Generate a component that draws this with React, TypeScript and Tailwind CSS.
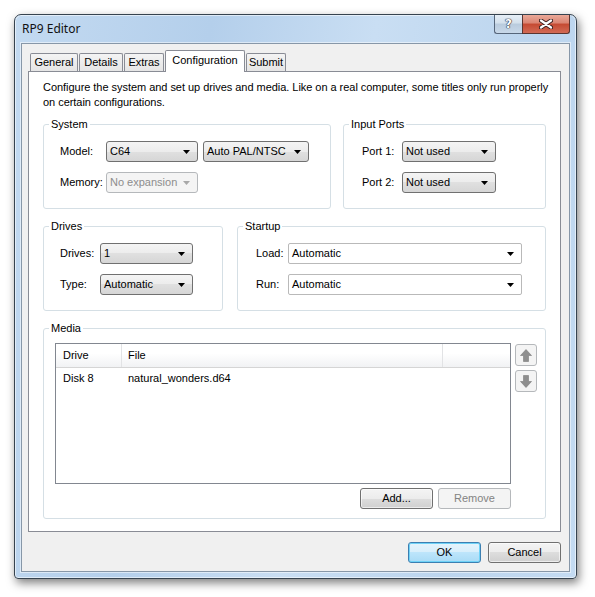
import React from "react";

const ui = "font-['Liberation_Sans',Arial,sans-serif] text-[11px] leading-[13px] text-black";

function Arrow({ color = "#000" }: { color?: string }) {
  return (
    <svg width="7" height="4" viewBox="0 0 7 4" className="shrink-0">
      <polygon points="0,0 7,0 3.5,4" fill={color} />
    </svg>
  );
}

type ComboProps = { value: string; width: string; kind?: "button" | "white" | "disabled" };

function Combo({ value, width, kind = "button" }: ComboProps) {
  const look =
    kind === "white"
      ? "border-[#b9b9b9] bg-white rounded-[2px]"
      : kind === "disabled"
      ? "border-[#b5b8bb] bg-[#f4f4f4] text-[#8d8d8d] rounded-[3px]"
      : "border-[#707070] bg-[linear-gradient(#f4f4f4,#ececec_50%,#e0e0e0_50%,#d6d6d6)] rounded-[3px]";
  return (
    <div className={`${width} h-[21px] flex items-center justify-between border pl-[3px] pr-[7px] ${look}`}>
      <span className="whitespace-nowrap">{value}</span>
      <Arrow color={kind === "disabled" ? "#a8a8a8" : "#000"} />
    </div>
  );
}

function Btn({ label, kind = "normal" }: { label: string; kind?: "normal" | "default" | "disabled" }) {
  const look =
    kind === "default"
      ? "border-[#3c7fb1] bg-[linear-gradient(#e5f4fc,#d7eefb_50%,#bde5fb_50%,#a9dbf6)] shadow-[inset_0_0_0_1px_#6fd2f7]"
      : kind === "disabled"
      ? "border-[#b5b8bb] bg-[#f4f4f4] text-[#838383]"
      : "border-[#707070] bg-[linear-gradient(#f4f4f4,#ececec_50%,#dddddd_50%,#d0d0d0)] shadow-[inset_0_0_0_1px_rgba(255,255,255,0.6)]";
  return (
    <div className={`w-[73px] h-[21px] flex items-center justify-center rounded-[3px] border ${look}`}>
      {label}
    </div>
  );
}

function MoveBtn({ down }: { down?: boolean }) {
  return (
    <div className="w-[22px] h-[22px] flex items-center justify-center rounded-[3px] border border-[#b5b8bb] bg-[#f4f4f4]">
      <svg width="12" height="13" viewBox="0 0 12 13" className={down ? "rotate-180" : ""}>
        <polygon points="6,0.5 11.5,6.5 8.5,6.5 8.5,12.5 3.5,12.5 3.5,6.5 0.5,6.5" fill="#8e8e8e" stroke="#7a7a7a" strokeWidth="0.6" />
      </svg>
    </div>
  );
}

function Group({ title, className, children }: { title: string; className?: string; children: React.ReactNode }) {
  return (
    <fieldset className={`border border-[#d5dfe5] rounded-[3px] ${className ?? ""}`}>
      <legend className="ml-[5px] px-[2px]">{title}</legend>
      {children}
    </fieldset>
  );
}

function Row({ label, labelW, children }: { label: string; labelW: string; children: React.ReactNode }) {
  return (
    <div className="flex items-center">
      <div className={`${labelW} shrink-0`}>{label}</div>
      {children}
    </div>
  );
}

const tabs = ["General", "Details", "Extras", "Configuration", "Submit"];
const tabW: Record<string, string> = {
  General: "w-[48px]",
  Details: "w-[44px]",
  Extras: "w-[40px]",
  Configuration: "w-[80px]",
  Submit: "w-[40px]",
};

export default function App() {
  return (
    <div className={`w-[595px] h-[597px] bg-white pt-[14px] pl-[14px] ${ui}`}>
      <div className="w-[563px] h-[565px] flex flex-col rounded-t-[7px] rounded-b-[4px] border border-[#36434f] px-[6px] pb-[6px] bg-[linear-gradient(100deg,#c3daf1_0%,#b4cfeb_30%,#c9def3_55%,#bcd5ee_80%,#c4dbf2_100%)] shadow-[inset_0_0_0_1px_rgba(255,255,255,0.55),2px_4px_10px_rgba(0,0,0,0.5)]">
        {/* title bar */}
        <div className="h-[28px] flex justify-between">
          <div className="pl-[1px] pt-[6px] font-['Noto_Sans',sans-serif] text-[12px] leading-[16px] text-[#111]">RP9 Editor</div>
          <div className="flex h-[19px]">
            <div className="w-[28px] flex items-center justify-center rounded-bl-[3px] border-l border-b border-[#56667a] bg-[linear-gradient(#e6eef6,#d3e0ec_45%,#b9cbdd_50%,#c8d8e9)]">
              <span className="font-['DejaVu_Sans',sans-serif] font-bold text-[12px] leading-[12px] text-white [text-shadow:0_0_1px_#223,0_0_1px_#223,0_0_1px_#223]">?</span>
            </div>
            <div className="w-[48px] flex items-center justify-center rounded-br-[3px] border-x border-b border-[#5b3530] bg-[linear-gradient(#eaa898,#da8472_45%,#c54a32_50%,#d26a55)]">
              <svg width="14" height="10" viewBox="0 0 14 10">
                <path d="M2,1.5 L12,8.5 M12,1.5 L2,8.5" stroke="#3a2020" strokeWidth="4.2" strokeLinecap="round" />
                <path d="M2,1.5 L12,8.5 M12,1.5 L2,8.5" stroke="#ffffff" strokeWidth="2.2" strokeLinecap="round" />
              </svg>
            </div>
          </div>
        </div>

        {/* client area */}
        <div className="flex-1 flex flex-col bg-[#f0f0f0] border border-[#8797a8] pt-[6px] pl-[6px] pr-[7px] shadow-[0_0_0_1px_rgba(255,255,255,0.5)]">
          <div className="h-[21px] flex items-end gap-[1px] pl-[2px]">
            {tabs.map((t) =>
              t === "Configuration" ? (
                <div key={t} className={`${tabW[t]} h-[22px] -mb-[1px] relative z-10 flex items-center justify-center pb-[2px] border-x border-t border-[#898c95] rounded-t-[2px] bg-white`}>
                  {t}
                </div>
              ) : (
                <div key={t} className={`${tabW[t]} h-[18px] flex items-center justify-center border-x border-t border-[#898c95] rounded-t-[2px] bg-[linear-gradient(#f4f4f4,#e5e5e5)]`}>
                  {t}
                </div>
              )
            )}
          </div>

          {/* tab page */}
          <div className="h-[461px] mr-[1px] border border-[#898c95] bg-white flex flex-col px-[14px] pt-[8px]">
            <p className="whitespace-nowrap leading-[15px] tracking-[-0.04px]">
              Configure the system and set up drives and media. Like on a real computer, some titles only run properly
              <br />
              on certain configurations.
            </p>

            <div className="flex gap-[12px] mt-[8px]">
              <Group title="System" className="w-[288px]">
                <div className="flex flex-col gap-[10px] pt-[10px] pb-[15px] pl-[16px]">
                  <Row label="Model:" labelW="w-[46px]">
                    <Combo value="C64" width="w-[92px]" />
                    <div className="ml-[5px]">
                      <Combo value="Auto PAL/NTSC" width="w-[106px]" />
                    </div>
                  </Row>
                  <Row label="Memory:" labelW="w-[46px]">
                    <Combo value="No expansion" width="w-[92px]" kind="disabled" />
                  </Row>
                </div>
              </Group>
              <Group title="Input Ports" className="flex-1">
                <div className="flex flex-col gap-[10px] pt-[10px] pb-[15px] pl-[18px]">
                  <Row label="Port 1:" labelW="w-[40px]">
                    <Combo value="Not used" width="w-[94px]" />
                  </Row>
                  <Row label="Port 2:" labelW="w-[40px]">
                    <Combo value="Not used" width="w-[94px]" />
                  </Row>
                </div>
              </Group>
            </div>

            <div className="flex gap-[14px] mt-[11px]">
              <Group title="Drives" className="w-[180px]">
                <div className="flex flex-col gap-[10px] pt-[10px] pb-[15px] pl-[16px]">
                  <Row label="Drives:" labelW="w-[40px]">
                    <Combo value="1" width="w-[93px]" />
                  </Row>
                  <Row label="Type:" labelW="w-[40px]">
                    <Combo value="Automatic" width="w-[93px]" />
                  </Row>
                </div>
              </Group>
              <Group title="Startup" className="flex-1">
                <div className="flex flex-col gap-[10px] pt-[10px] pb-[15px] pl-[18px]">
                  <Row label="Load:" labelW="w-[32px]">
                    <Combo value="Automatic" width="w-[234px]" kind="white" />
                  </Row>
                  <Row label="Run:" labelW="w-[32px]">
                    <Combo value="Automatic" width="w-[234px]" kind="white" />
                  </Row>
                </div>
              </Group>
            </div>

            <Group title="Media" className="mt-[11px]">
              <div className="flex pt-[8px] pl-[11px] pr-[8px] pb-[9px]">
                <div className="w-[456px] flex flex-col">
                  <div className="h-[141px] border border-[#828790] bg-white flex flex-col">
                    <div className="h-[24px] flex border-b border-[#d5d5d5] bg-[linear-gradient(#ffffff,#ffffff_40%,#f1f2f4)]">
                      <div className="w-[66px] flex items-center pl-[7px] border-r border-[#e2e3e5]">Drive</div>
                      <div className="w-[321px] flex items-center pl-[6px] border-r border-[#e2e3e5]">File</div>
                      <div className="flex-1" />
                    </div>
                    <div className="h-[17px] mt-[2px] flex items-center">
                      <div className="w-[66px] pl-[7px]">Disk 8</div>
                      <div className="pl-[6px]">natural_wonders.d64</div>
                    </div>
                  </div>
                  <div className="flex justify-end gap-[5px] mt-[4px]">
                    <Btn label="Add..." />
                    <Btn label="Remove" kind="disabled" />
                  </div>
                </div>
                <div className="flex flex-col gap-[4px] ml-[4px] mt-[1px]">
                  <MoveBtn />
                  <MoveBtn down />
                </div>
              </div>
            </Group>
          </div>

          {/* dialog buttons */}
          <div className="flex justify-end gap-[6px] mt-[10px]">
            <div className="w-[74px]">
              <Btn label="OK" kind="default" />
            </div>
            <div className="w-[74px]">
              <Btn label="Cancel" />
            </div>
          </div>
        </div>
      </div>
    </div>
  );
}
